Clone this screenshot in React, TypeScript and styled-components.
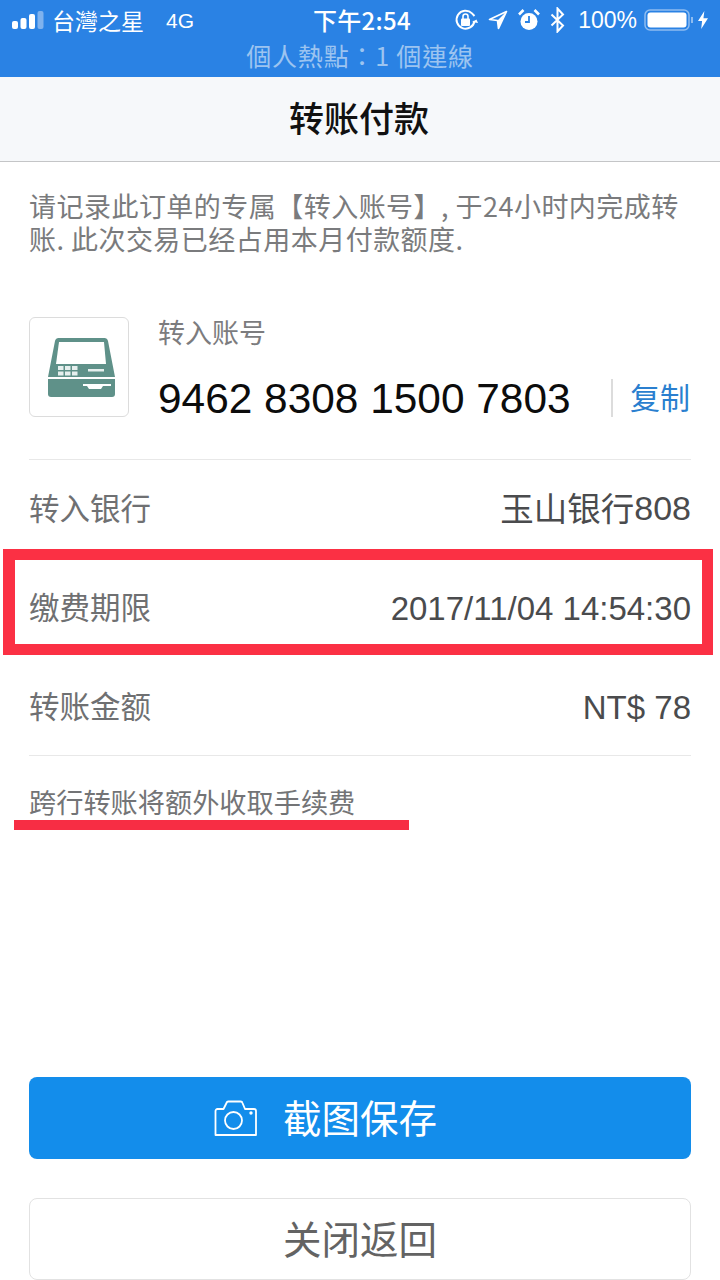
import React from 'react';
import styled, { createGlobalStyle } from 'styled-components';

const CJK = '"Noto Sans CJK SC", "Liberation Sans", sans-serif';
const LATIN = '"Liberation Sans", "Noto Sans CJK SC", sans-serif';

const Global = createGlobalStyle`
  html, body { margin: 0; padding: 0; background: #fff; }
  * { box-sizing: border-box; }
`;

const Page = styled.div`
  position: relative;
  width: 720px;
  height: 1280px;
  overflow: hidden;
  display: flex;
  flex-direction: column;
  font-family: ${CJK};
  background: #fff;
`;

const TopBlue = styled.div`
  height: 77px;
  background: #2a82e4;
  color: #fff;
`;

const StatusBar = styled.div`
  height: 40px;
  display: flex;
  align-items: center;
  padding: 0 12px;
  line-height: 1;
`;

const StatusLeft = styled.div`
  display: flex;
  align-items: center;
  gap: 8px;
  width: 301px;
`;

const Carrier = styled.span`
  font-family: "Noto Sans CJK TC", sans-serif;
  font-size: 23px;
`;

const Network = styled.span`
  font-family: ${LATIN};
  font-size: 21px;
  margin-left: 14px;
`;

const Clock = styled.span`
  font-size: 24px;
  font-weight: 500;
  letter-spacing: 0.3px;
`;

const StatusRight = styled.div`
  flex: 1;
  display: flex;
  align-items: center;
  justify-content: flex-end;
  gap: 10px;
`;

const Percent = styled.span`
  font-family: ${LATIN};
  font-size: 23px;
  margin-left: 3px;
  margin-right: -3px;
`;

const Hotspot = styled.div`
  height: 36px;
  line-height: 31px;
  text-align: center;
  font-family: "Noto Sans CJK TC", sans-serif;
  font-size: 25px;
  letter-spacing: 0.8px;
  color: #9cc4f0;
`;

const NavBar = styled.header`
  height: 85px;
  background: #f6f8fa;
  border-bottom: 1px solid #c4c5c7;
  display: flex;
  align-items: center;
  justify-content: center;
  font-size: 35px;
  font-weight: 500;
  color: #111;
  padding: 0 2px 6px 0;
`;

const Body = styled.main`
  flex: 1;
  display: flex;
  flex-direction: column;
  padding: 27px 29px 0;
`;

const Intro = styled.p`
  margin: 0;
  font-size: 27px;
  line-height: 33px;
  color: #7a7b7d;
  letter-spacing: 0.47px;
`;

const AccountBlock = styled.section`
  display: flex;
  align-items: flex-start;
  gap: 29px;
  height: 143px;
  margin-top: 62px;
  border-bottom: 1px solid #e8e8e8;
`;

const AtmBox = styled.div`
  width: 100px;
  height: 100px;
  flex: none;
  border: 1px solid #dcdcdc;
  border-radius: 6px;
  padding-left: 4px;
  display: flex;
  align-items: center;
  justify-content: center;
`;

const AccountInfo = styled.div`
  flex: 1;
  display: flex;
  flex-direction: column;
  margin-top: -2px;
`;

const AccountLabel = styled.div`
  font-size: 27px;
  line-height: 34px;
  color: #7c7c7e;
`;

const AccountLine = styled.div`
  display: flex;
  align-items: center;
  justify-content: space-between;
  margin-top: 23px;
`;

const AccountNumber = styled.div`
  font-family: ${LATIN};
  font-size: 42.4px;
  line-height: 54px;
  color: #0c0c0c;
`;

const CopyLink = styled.div`
  border-left: 2px solid #dcdcdc;
  padding-left: 17px;
  margin: 0 1px 3px 0;
  height: 38px;
  line-height: 34px;
  font-size: 30px;
  color: #2a7fcf;
`;

const InfoRow = styled.div<{ $last?: boolean }>`
  height: ${(p) => (p.$last ? '97px' : '99.5px')};
  padding-bottom: ${(p) => (p.$last ? '4px' : '6px')};
  display: flex;
  align-items: center;
  justify-content: space-between;
  font-size: 30.5px;
  color: #6f7072;
  border-bottom: ${(p) => (p.$last ? '1px solid #e8e8e8' : 'none')};
`;

const InfoValue = styled.span`
  font-family: ${LATIN};
  font-size: 33px;
  padding-top: 5px;
  color: #4a4b4d;
`;

const BankValue = styled.span`
  font-size: 33.5px;
  color: #4a4b4d;
  display: flex;
  align-items: center;
`;

const BankCode = styled.span`
  font-family: ${LATIN};
  font-size: 34px;
  padding-top: 3px;
`;

const Note = styled.div`
  margin-top: 27px;
  font-size: 27.2px;
  line-height: 36px;
  color: #737476;
`;

const Actions = styled.div`
  margin-top: auto;
  display: flex;
  flex-direction: column;
  gap: 39px;
`;

const PrimaryButton = styled.div`
  height: 82px;
  padding-bottom: 4px;
  border-radius: 8px;
  background: #138deb;
  color: #fff;
  display: grid;
  grid-template-columns: 1fr auto 1fr;
  align-items: center;
  font-size: 38.5px;
`;

const CameraSlot = styled.span`
  justify-self: end;
  display: flex;
  margin: 4px 25px 0 0;
`;

const SecondaryButton = styled.div`
  height: 82px;
  padding-bottom: 5px;
  border: 1px solid #e2e2e2;
  border-radius: 8px;
  color: #636363;
  display: flex;
  align-items: center;
  justify-content: center;
  font-size: 38.5px;
`;

const RedFrame = styled.div`
  position: absolute;
  left: 3px;
  top: 549px;
  width: 710px;
  height: 106px;
  border: solid #fb3044;
  border-width: 11px 11px 11px 12px;
`;

const RedUnderline = styled.div`
  position: absolute;
  left: 14px;
  top: 820px;
  width: 395px;
  height: 10px;
  background: #f72d44;
`;

const SignalIcon = () => (
  <svg width="32" height="18" viewBox="0 0 32 18">
    <rect x="0" y="10" width="6" height="8" rx="2" fill="#fff" />
    <rect x="8.5" y="7" width="6" height="11" rx="2" fill="#fff" />
    <rect x="17" y="3" width="6" height="15" rx="2" fill="#fff" />
    <rect x="25.5" y="0" width="6" height="18" rx="2" fill="#7fb2ee" />
  </svg>
);

const RotationIcon = () => (
  <svg width="24" height="24" viewBox="0 0 24 24" fill="none" stroke="#fff">
    <path d="M20.5 13a9 9 0 1 1-2.5-7.6L20.5 8" strokeWidth="2" />
    <path d="M18 14l4.5-2.5L24 15z" fill="#fff" stroke="none" />
    <rect x="7" y="10.5" width="9" height="7.5" rx="1" fill="#fff" stroke="none" />
    <path d="M9 11V8.5a2.5 2.5 0 0 1 5 0V11" strokeWidth="1.6" />
  </svg>
);

const LocationIcon = () => (
  <svg width="20" height="20" viewBox="0 0 20 20" fill="none">
    <path d="M18.5 1.5 1.5 9.5l8 1 1 8z" stroke="#fff" strokeWidth="1.7" strokeLinejoin="round" />
    <path d="M18.5 1.5 9.5 10.5l1 8z" fill="#fff" />
  </svg>
);

const AlarmIcon = () => (
  <svg width="22" height="24" viewBox="0 0 22 24" fill="none">
    <circle cx="11" cy="13.5" r="8.5" fill="#fff" />
    <path d="M11 8v6H7" stroke="#2a82e4" strokeWidth="1.8" />
    <path d="M1 6.5 5.5 2M21 6.5 16.5 2" stroke="#fff" strokeWidth="2.6" />
  </svg>
);

const BluetoothIcon = () => (
  <svg width="15" height="26" viewBox="0 0 15 26" fill="none">
    <path d="M1.5 7.5 13 18.5 7.5 24.5V1.5L13 7.5 1.5 18.5" stroke="#fff" strokeWidth="2" />
  </svg>
);

const BatteryIcon = () => (
  <svg width="50" height="22" viewBox="0 0 50 22" fill="none" style={{ marginRight: -6 }}>
    <rect x="1" y="1" width="44" height="20" rx="5" stroke="#8ebcf0" strokeWidth="1.5" />
    <rect x="3.5" y="3.5" width="39" height="15" rx="3" fill="#fff" />
    <path d="M48 8v6" stroke="#8ebcf0" strokeWidth="2" />
  </svg>
);

const BoltIcon = () => (
  <svg width="10" height="20" viewBox="0 0 11 20">
    <path d="M7 0 0 11h4.5L3.5 20 11 8H6z" fill="#fff" />
  </svg>
);

const AtmIcon = () => (
  <svg width="67" height="59" viewBox="0 0 67 59">
    <path d="M11 0h45a4 4 0 0 1 4 3l7 36H0L7 3a4 4 0 0 1 4-3z" fill="#5f9189" />
    <path d="M0 41h67v15a3 3 0 0 1-3 3H3a3 3 0 0 1-3-3z" fill="#5f9189" />
    <path d="M11 4h45l2 22H8z" fill="#fff" />
    <g fill="#e6efee">
      <rect x="10" y="28" width="5.5" height="4" />
      <rect x="17" y="28" width="5.5" height="4" />
      <rect x="24" y="28" width="5.5" height="4" />
      <rect x="10" y="33.5" width="5.5" height="4" />
      <rect x="17" y="33.5" width="5.5" height="4" />
      <rect x="24" y="33.5" width="5.5" height="4" />
      <rect x="40" y="31" width="16" height="2.5" />
    </g>
    <path d="M35 46h28v2h-8l-2 3H41l-2-3h-4z" fill="#fff" />
  </svg>
);

const CameraIcon = () => (
  <svg width="44" height="37" viewBox="0 0 44 37" fill="none" stroke="#fff" strokeWidth="1.8">
    <path
      d="M1.5 35V11a2 2 0 0 1 2-2h6l3-6a2 2 0 0 1 1.8-1.5h12.4a2 2 0 0 1 1.8 1.5l2.5 6h9a2 2 0 0 1 2 2V35z"
      strokeLinejoin="round"
    />
    <circle cx="19.5" cy="20.5" r="8.5" />
    <circle cx="37" cy="13" r="0.8" fill="#fff" />
  </svg>
);

export default function App() {
  return (
    <Page>
      <Global />
      <TopBlue>
        <StatusBar>
          <StatusLeft>
            <SignalIcon />
            <Carrier>台灣之星</Carrier>
            <Network>4G</Network>
          </StatusLeft>
          <Clock>下午2:54</Clock>
          <StatusRight>
            <RotationIcon />
            <LocationIcon />
            <AlarmIcon />
            <BluetoothIcon />
            <Percent>100%</Percent>
            <BatteryIcon />
            <BoltIcon />
          </StatusRight>
        </StatusBar>
        <Hotspot>個人熱點：1 個連線</Hotspot>
      </TopBlue>
      <NavBar>转账付款</NavBar>
      <Body>
        <Intro>
          请记录此订单的专属【转入账号】, 于24小时内完成转
          <br />
          账. 此次交易已经占用本月付款额度.
        </Intro>
        <AccountBlock>
          <AtmBox>
            <AtmIcon />
          </AtmBox>
          <AccountInfo>
            <AccountLabel>转入账号</AccountLabel>
            <AccountLine>
              <AccountNumber>9462 8308 1500 7803</AccountNumber>
              <CopyLink>复制</CopyLink>
            </AccountLine>
          </AccountInfo>
        </AccountBlock>
        <InfoRow>
          转入银行
          <BankValue>
            玉山银行<BankCode>808</BankCode>
          </BankValue>
        </InfoRow>
        <InfoRow>
          缴费期限
          <InfoValue>2017/11/04 14:54:30</InfoValue>
        </InfoRow>
        <InfoRow $last>
          转账金额
          <InfoValue>NT$ 78</InfoValue>
        </InfoRow>
        <Note>跨行转账将额外收取手续费</Note>
        <Actions>
          <PrimaryButton>
            <CameraSlot>
              <CameraIcon />
            </CameraSlot>
            截图保存
          </PrimaryButton>
          <SecondaryButton>关闭返回</SecondaryButton>
        </Actions>
      </Body>
      <RedFrame />
      <RedUnderline />
    </Page>
  );
}
